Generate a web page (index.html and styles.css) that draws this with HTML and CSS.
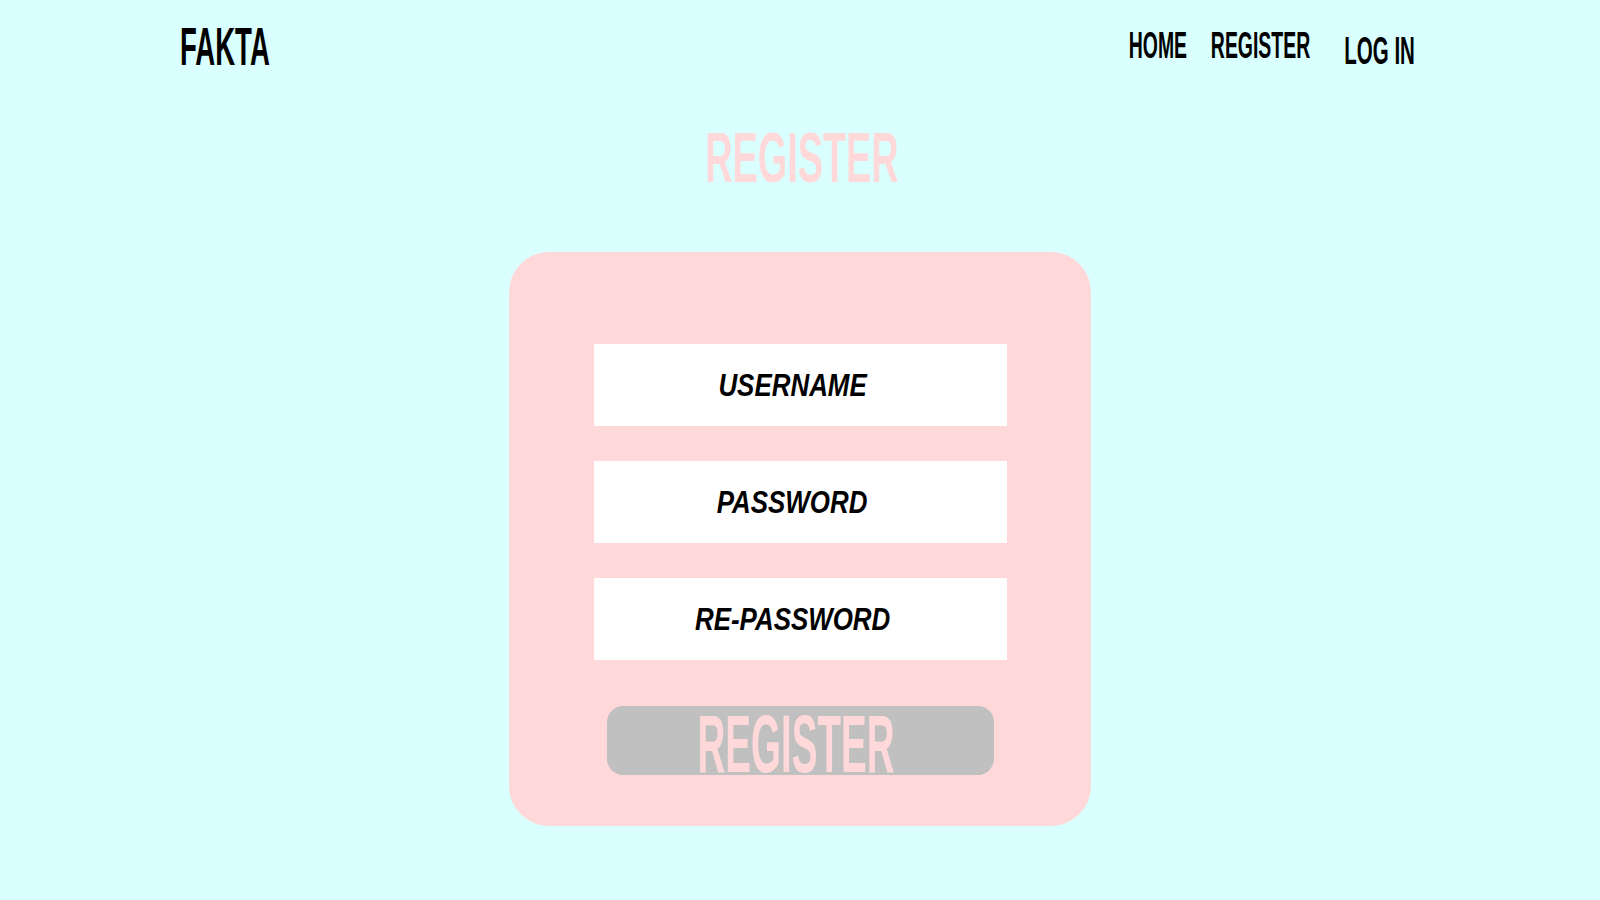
FILE: index.html
```html
<!DOCTYPE html>
<html lang="en">
<head>
    <meta charset="UTF-8">
    <meta name="viewport" content="width=device-width, initial-scale=1.0">
    <title>Register - Fakta</title>
    <link rel="stylesheet" href="styles.css">
</head>
<body>
    <header>
        <a href="index.html" class="logo-link">
            <div class="logo">FAKTA</div>
        </a>
        <nav>
            <ul>
                <li><a href="index.html">HOME</a></li>
                <li><a href="register.html">REGISTER</a></li>
                <li class="login"><a href="login.html">LOG IN</a></li>
            </ul>
        </nav>
    </header>

    <h1 class="page-title"><span>REGISTER</span></h1>

    <form class="register-box" onsubmit="return false;">
        <label class="field"><span>USERNAME</span></label>
        <label class="field"><span>PASSWORD</span></label>
        <label class="field"><span>RE-PASSWORD</span></label>
        <button type="submit" class="register-button"><span>REGISTER</span></button>
    </form>
</body>
</html>
```

FILE: styles.css
```css
body {
    font-family: "Liberation Sans", Arial, sans-serif;
    margin: 0;
    padding: 0;
    background-color: #D9FFFF; /* light cyan */
    min-height: 100vh;
}

header {
    display: flex;
    justify-content: space-between;
    align-items: flex-start;
    padding: 20px 185px 0 180px;
}

.logo-link {
    text-decoration: none;
}

.logo {
    font-size: 53px;
    line-height: 53px;
    font-weight: bold;
    color: #000;
    transform: scaleX(0.52);
    transform-origin: left center;
}

nav {
    margin-top: 8px;
    transform: scaleX(0.54);
    transform-origin: right center;
}

nav ul {
    list-style: none;
    display: flex;
    align-items: flex-start;
    margin: 0;
    padding: 0;
}

nav ul li {
    margin-left: 44px;
}

nav ul li a {
    color: #000;
    text-decoration: none;
    font-weight: bold;
    font-size: 36px;
    line-height: 36px;
}

nav ul li.login {
    margin-left: 63px;
    margin-top: 4px;
}

nav ul li.login a {
    font-size: 38px;
    line-height: 38px;
}

.page-title {
    margin: 50px 0 0;
    text-align: center;
    font-size: 70px;
    line-height: 70px;
    color: #FFD9D9; /* pink */
}

.page-title span {
    display: inline-block;
    transform: scaleX(0.54);
    margin-left: 3px;
}

.register-box {
    box-sizing: border-box;
    width: 582px;
    height: 574px;
    margin: 59px auto 0;
    padding: 92px 84px 0 85px;
    background-color: #FFD9D9;
    border-radius: 40px;
    display: flex;
    flex-direction: column;
    gap: 35px;
}

.field {
    box-sizing: border-box;
    height: 82px;
    background-color: #fff;
    padding-right: 16px;
    display: flex;
    align-items: center;
    justify-content: center;
    cursor: text;
}

.field span {
    display: inline-block;
    font-size: 32px;
    line-height: 32px;
    font-weight: bold;
    font-style: italic;
    color: #000;
    transform: scaleX(0.81);
}

.register-button {
    box-sizing: border-box;
    display: block;
    height: 69px;
    margin: 11px 13px 0;
    padding: 7px 0 0;
    border: none;
    border-radius: 16px;
    background-color: #C0C0C0; /* gray button */
    color: #FFD9D9;
    font-family: "Liberation Sans", Arial, sans-serif;
    font-size: 81px;
    line-height: 62px;
    font-weight: bold;
    cursor: pointer;
}

.register-button span {
    display: inline-block;
    transform: scaleX(0.476);
    margin-left: -18px;
}
```
